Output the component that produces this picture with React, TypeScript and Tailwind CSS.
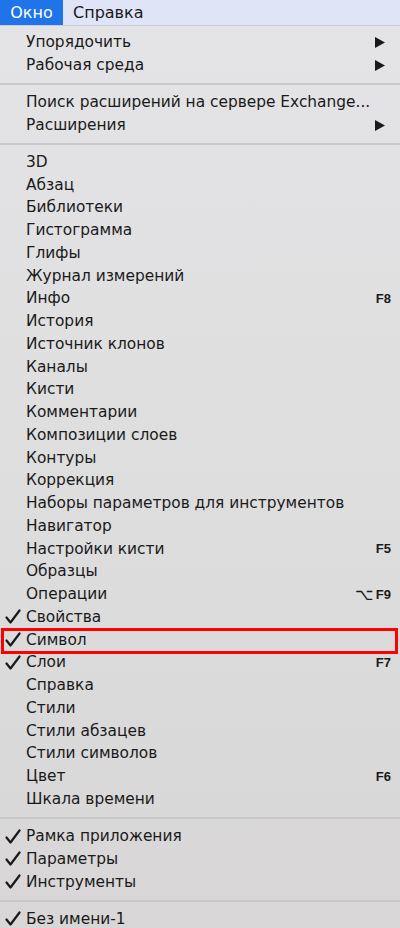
import React from "react";

type Item = { label: string; check?: boolean; arrow?: boolean; shortcut?: string; opt?: boolean; boxed?: boolean };
type Entry = Item | "sep";

const entries: Entry[] = [
  { label: "Упорядочить", arrow: true },
  { label: "Рабочая среда", arrow: true },
  "sep",
  { label: "Поиск расширений на сервере Exchange..." },
  { label: "Расширения", arrow: true },
  "sep",
  { label: "3D" },
  { label: "Абзац" },
  { label: "Библиотеки" },
  { label: "Гистограмма" },
  { label: "Глифы" },
  { label: "Журнал измерений" },
  { label: "Инфо", shortcut: "F8" },
  { label: "История" },
  { label: "Источник клонов" },
  { label: "Каналы" },
  { label: "Кисти" },
  { label: "Комментарии" },
  { label: "Композиции слоев" },
  { label: "Контуры" },
  { label: "Коррекция" },
  { label: "Наборы параметров для инструментов" },
  { label: "Навигатор" },
  { label: "Настройки кисти", shortcut: "F5" },
  { label: "Образцы" },
  { label: "Операции", shortcut: "F9", opt: true },
  { label: "Свойства", check: true },
  { label: "Символ", check: true, boxed: true },
  { label: "Слои", check: true, shortcut: "F7" },
  { label: "Справка" },
  { label: "Стили" },
  { label: "Стили абзацев" },
  { label: "Стили символов" },
  { label: "Цвет", shortcut: "F6" },
  { label: "Шкала времени" },
  "sep",
  { label: "Рамка приложения", check: true },
  { label: "Параметры", check: true },
  { label: "Инструменты", check: true },
  "sep",
  { label: "Без имени-1", check: true },
];

function Check() {
  return (
    <svg width="16" height="16" viewBox="0 0 16 16" className="ml-[5px]">
      <path d="M1.5 8.5 L5.5 13.5 L14.5 1.5" fill="none" stroke="#1a1a1a" strokeWidth="2.2" strokeLinecap="round" strokeLinejoin="round" />
    </svg>
  );
}

function Row({ item }: { item: Item }) {
  return (
    <div className="relative flex h-[22.75px] items-center text-[15.4px] text-[#1a1a1a]">
      <span className="flex w-[26px] shrink-0 items-center">{item.check ? <Check /> : null}</span>
      <span className="flex-1 whitespace-nowrap">{item.label}</span>
      {item.arrow && (
        <svg width="12" height="13" viewBox="0 0 12 13" className="mr-[14px]">
          <path d="M1 1 L11 6.5 L1 12 Z" fill="#1a1a1a" />
        </svg>
      )}
      {item.shortcut && (
        <span
          className="mr-[9px] flex items-center gap-[3px] text-[13px] font-bold text-[#1a1a1a]"
          style={{ fontFamily: '"Liberation Sans", Arial, sans-serif' }}
        >
          {item.opt && <span className="text-[16px] font-normal">⌥</span>}
          {item.shortcut}
        </span>
      )}
      {item.boxed && (
        <div className="absolute left-[1px] right-[2px] top-[-1px] bottom-[-2px] border-[3px] border-[#ff0000]" />
      )}
    </div>
  );
}

export default function App() {
  return (
    <div
      className="flex h-[928px] w-[400px] flex-col overflow-hidden"
      style={{ fontFamily: '"DejaVu Sans", Verdana, sans-serif' }}
    >
      <div className="flex h-[26px] shrink-0 items-stretch border-b border-[#c9ccd6] bg-[#dfe5f6] text-[16px] text-[#1a1a1a]">
        <div className="flex w-[63px] items-center justify-center bg-[#1f74ea] text-white">Окно</div>
        <div className="flex items-center pl-[10px]">Справка</div>
      </div>
      <div className="flex-1 bg-gradient-to-b from-[#e4e4e6] via-[#dededf] to-[#d8d6d6] pt-[5px]">
        {entries.map((e, i) =>
          e === "sep" ? (
            <div key={i} className="flex h-[14.5px] items-center">
              <div className="h-[2px] w-full bg-[#c8c8ca]" />
            </div>
          ) : (
            <Row key={i} item={e} />
          )
        )}
      </div>
    </div>
  );
}
